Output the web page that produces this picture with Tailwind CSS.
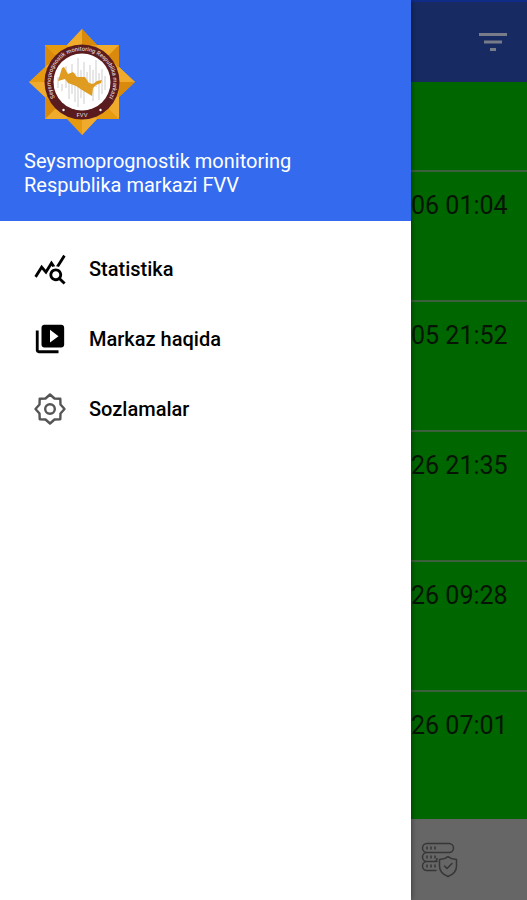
<!DOCTYPE html>
<html lang="uz">
<head>
<meta charset="utf-8">
<meta name="viewport" content="width=device-width, initial-scale=1">
<title>Seysmoprognostik monitoring</title>
<script src="https://cdn.jsdelivr.net/npm/@tailwindcss/browser@4"></script>
</head>
<body class="flex h-screen overflow-hidden bg-white font-['Roboto',sans-serif]">
  <aside class="z-10 flex w-[78%] shrink-0 flex-col bg-white shadow-[0_0_6px_rgba(0,0,0,0.5)]">
    <header class="bg-[#346bee] px-6 pt-7 pb-6 text-white">
      <svg class="ml-1 size-[108px]" viewBox="-54 -54 108 108" role="img" aria-label="FVV">
        <g id="rays">
          <path fill="#e69a10" d="M0-53L15-37H37V-15L53 0L37 15V37H15L0 53L-15 37H-37V15L-53 0L-37-15V-37H-15Z"/>
          <path fill="#f0ab2c" d="M0-53L0 0L-15-37ZM37-37L0 0L15-37ZM53 0L0 0L37-15ZM37 37L0 0L37 15ZM0 53L0 0L15 37ZM-37 37L0 0L-15 37ZM-53 0L0 0L-37 15ZM-37-37L0 0L-37-15Z"/>
          <path fill="#d98a0c" d="M0-53L15-37H0ZM37-37V-15L25-25ZM53 0L37 15V0ZM-37-37L-25-25L-37-15ZM-37 37L-25 25L-37 15Z"/>
        </g>
        <circle r="37.500" fill="#591b1d"/>
        <circle r="28.500" fill="#fff"/>
        <path id="ring" fill="none" d="M-24.500 19.500A31.300 31.300 0 1 1 24.500 19.500"/>
        <text fill="#e0cdcb" font-size="5.800" font-weight="500"><textPath href="#ring" startOffset="50%" text-anchor="middle">Seysmoprognostik monitoring Respublika markazi</textPath></text>
        <text y="35" text-anchor="middle" fill="#e9dcda" font-size="6">FVV</text>
        <circle cx="-18.500" cy="28" r="1.200" fill="#fff"/><circle cx="18.500" cy="28" r="1.200" fill="#fff"/>
        <path fill="none" stroke="#999" stroke-width=".5" d="M-24-5V6M-20 2V9M-16-16V6M-13-2V17M-10-18V12M-7-9V20M-4-24V25M-1-12V16M2-20V22M5-10V4M8-17V10M11-12V19M14-22V5M17-9V18M20-13V12M23-6V8"/>
        <path fill="#df9c20" d="M-24-1L-20-14L-18-15L-14-8L-9-10L-5-5L3-5L7 1L11 2L15-1L20-2L19 1L14 3L11 6L10 14L5 11L0 8L-6 4L-14 1L-17-3Z"/>
      </svg>
      <h1 class="mt-[13px] text-xl leading-6">Seysmoprognostik monitoring<br>Respublika markazi FVV</h1>
    </header>
    <nav class="flex flex-col pt-[13px] text-xl font-medium text-black">
      <a href="#" class="flex h-[70px] items-center gap-[22px] pl-[33px]">
        <svg class="size-[34px]" viewBox="0 0 24 24" fill="currentColor" aria-hidden="true"><path d="M19.880 18.470c.44-.7.7-1.510.7-2.390 0-2.490-2.010-4.500-4.500-4.500s-4.500 2.010-4.500 4.500 2.010 4.500 4.490 4.500c.88 0 1.700-.26 2.390-.7L21.580 23 23 21.580l-3.120-3.110zm-3.800.110c-1.380 0-2.500-1.120-2.500-2.500s1.120-2.500 2.500-2.500 2.500 1.120 2.500 2.500-1.120 2.500-2.500 2.500zm-.36-8.500c-.74.020-1.450.180-2.100.450l-.55-.83-3.800 6.180-3.010-3.520-3.630 5.810L1 17l5-8 3 3.500L13 6l2.720 4.080zm2.590.5c-.64-.28-1.330-.45-2.050-.49L21.380 2 23 3.180l-4.690 7.400z"/></svg>
        <span>Statistika</span>
      </a>
      <a href="#" class="flex h-[70px] items-center gap-[22px] pl-[33px]">
        <svg class="size-[34px]" viewBox="0 0 24 24" fill="currentColor" aria-hidden="true"><path d="M4 6H2v14c0 1.100.9 2 2 2h14v-2H4V6zm16-4H8c-1.100 0-2 .9-2 2v12c0 1.100.9 2 2 2h12c1.100 0 2-.9 2-2V4c0-1.100-.9-2-2-2zm-8 12.500v-9l6 4.500-6 4.500z"/></svg>
        <span>Markaz haqida</span>
      </a>
      <a href="#" class="flex h-[70px] items-center gap-[22px] pl-[33px]">
        <svg class="size-[34px]" viewBox="-17 -17 34 34" fill="none" stroke="#555" stroke-width="2.400" stroke-linejoin="round" aria-hidden="true"><path d="M0-14.500L4.500-10.500L10.300-10.300L10.500-4.500L14.500 0L10.500 4.500L10.300 10.300L4.500 10.500L0 14.500L-4.500 10.500L-10.300 10.300L-10.500 4.500L-14.500 0L-10.500-4.500L-10.300-10.300L-4.500-10.500Z"/><circle r="4.800"/></svg>
        <span>Sozlamalar</span>
      </a>
    </nav>
  </aside>

  <main class="flex min-w-0 flex-1 flex-col bg-[#006600] text-[25px] leading-8 text-[#051405]">
    <div class="flex h-[82px] shrink-0 items-center justify-end border-t-2 border-[#102c88] bg-[#172b62] pr-5">
      <button type="button" aria-label="Filtr" class="text-[#777c88]">
        <svg class="block h-7 w-7" viewBox="0 0 28 28" fill="currentColor" aria-hidden="true"><path d="M0 5h28v3H0zM5 12.500h18v3H5zM11 20h6v3h-6z"/></svg>
      </button>
    </div>
    <ul class="min-h-0 flex-1 overflow-hidden whitespace-nowrap">
      <li class="h-[90px] border-b-2 border-[#3c603c]"></li>
      <li class="h-[130px] border-b-2 border-[#3c603c] pt-[18px]">06 01:04</li>
      <li class="h-[130px] border-b-2 border-[#3c603c] pt-[18px]">05 21:52</li>
      <li class="h-[130px] border-b-2 border-[#3c603c] pt-[18px]">26 21:35</li>
      <li class="h-[130px] border-b-2 border-[#3c603c] pt-[18px]">26 09:28</li>
      <li class="pt-[18px]">26 07:01</li>
    </ul>
    <footer class="flex h-[81px] shrink-0 items-center bg-[#666] pl-[10px]">
      <button type="button" aria-label="Server himoyasi">
        <svg class="block h-9 w-[38px]" viewBox="0 0 38 36" fill="none" stroke="#363636" stroke-width="1.500" stroke-linecap="round" stroke-linejoin="round" aria-hidden="true"><path d="M6 1.500H28a4.500 4.500 0 0 1 0 9H6a4.500 4.500 0 0 1 0-9ZM16 10.500H6a4.500 4.500 0 0 0 0 9H14a3 3 0 0 0 2-3M16 19.500H6a4.500 4.500 0 0 0 0 9H15M27 14.500C24.500 16.800 22 17.300 18.500 17.500V24C18.500 29 22 32.500 27 34.500C32 32.500 35.500 29 35.500 24V17.500C32 17.300 29.500 16.800 27 14.500ZM23.500 24L26 26.500L31 21.500"/><path d="M6 5v2M10 5v2M14 5v2M6 14v2M10 14v2M14 14v2M6 23v2M10 23v2M14 23v2"/></svg>
      </button>
    </footer>
  </main>
</body>
</html>
